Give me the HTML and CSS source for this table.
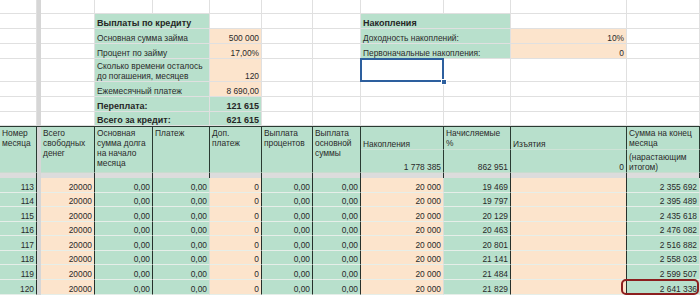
FILE: index.html
```html
<!DOCTYPE html>
<html lang="ru">
<head>
<meta charset="utf-8">
<title>Кредит и накопления</title>
<link rel="stylesheet" href="styles.css">
</head>
<body>
<table class="sheet">
  <colgroup>
    <col class="w-a"><col class="w-gap"><col class="w-b"><col class="w-c"><col class="w-d"><col class="w-e">
    <col class="w-f"><col class="w-g"><col class="w-h"><col class="w-i"><col class="w-j"><col class="w-k">
  </colgroup>
  <tbody>
    <tr class="h14">
      <td></td><td class="gap"></td><td></td><td></td><td></td><td></td><td></td><td></td><td></td><td></td><td></td><td></td>
    </tr>
    <tr class="h15">
      <td></td><td class="gap"></td><td></td>
      <td class="lbl title" colspan="2">Выплаты по кредиту</td>
      <td></td><td></td><td></td>
      <td class="lbl title" colspan="2">Накопления</td>
      <td></td><td></td>
    </tr>
    <tr class="h15">
      <td></td><td class="gap"></td><td></td>
      <td class="lbl" colspan="2">Основная сумма займа</td>
      <td class="inp num">500 000</td>
      <td></td><td></td>
      <td class="lbl" colspan="2">Доходность накоплений:</td>
      <td class="inp num">10%</td>
      <td></td>
    </tr>
    <tr class="h15">
      <td></td><td class="gap"></td><td></td>
      <td class="lbl" colspan="2">Процент по займу</td>
      <td class="inp num">17,00%</td>
      <td></td><td></td>
      <td class="lbl" colspan="2">Первоначальные накопления:</td>
      <td class="inp num">0</td>
      <td></td>
    </tr>
    <tr class="h23">
      <td></td><td class="gap"></td><td></td>
      <td class="lbl" colspan="2">Сколько времени осталось<br>до погашения, месяцев</td>
      <td class="inp num">120</td>
      <td></td><td></td>
      <td class="sel"><span class="selbox"></span><span class="handle"></span></td>
      <td></td><td></td><td></td>
    </tr>
    <tr class="h15">
      <td></td><td class="gap"></td><td></td>
      <td class="lbl" colspan="2">Ежемесячный платеж</td>
      <td class="inp num">8 690,00</td>
      <td></td><td></td><td></td><td></td><td></td><td></td>
    </tr>
    <tr class="h15">
      <td></td><td class="gap"></td><td></td>
      <td class="lbl title" colspan="2">Переплата:</td>
      <td class="lbl num title">121 615</td>
      <td></td><td></td><td></td><td></td><td></td><td></td>
    </tr>
    <tr class="h14">
      <td></td><td class="gap"></td><td></td>
      <td class="lbl title" colspan="2">Всего за кредит:</td>
      <td class="lbl num title">621 615</td>
      <td></td><td></td><td></td><td></td><td></td><td></td>
    </tr>

    <tr class="hd1">
      <td class="hd" rowspan="2">Номер<br>месяца</td>
      <td class="gap hdgap" rowspan="2"></td>
      <td class="hd" rowspan="2">Всего<br>свободных<br>денег</td>
      <td class="hd" rowspan="2">Основная<br>сумма долга<br>на начало<br>месяца</td>
      <td class="hd" rowspan="2">Платеж</td>
      <td class="hd" rowspan="2">Доп.<br>платеж</td>
      <td class="hd" rowspan="2">Выплата<br>процентов</td>
      <td class="hd" rowspan="2">Выплата<br>основной<br>суммы</td>
      <td class="hd hd-top bottom">Накопления</td>
      <td class="hd hd-top">Начисляемые<br>%</td>
      <td class="hd hd-top bottom">Изъятия</td>
      <td class="hd hd-top">Сумма на конец<br>месяца</td>
    </tr>
    <tr class="hd2">
      <td class="hd hd-sub num bottom">1 778 385</td>
      <td class="hd hd-sub num bottom">862 951</td>
      <td class="hd hd-sub num bottom">0</td>
      <td class="hd hd-sub">(нарастающим<br>итогом)</td>
    </tr>
    <tr class="divider">
      <td class="dk"></td><td class="gap"></td><td class="dk"></td><td class="dk"></td><td class="dk"></td><td class="dk"></td>
      <td class="dk"></td><td class="dk"></td><td class="dk"></td><td class="dk"></td><td class="dk"></td><td class="dk"></td>
    </tr>

    <tr class="d15">
      <td class="g dk num">113</td><td class="gap"></td><td class="p dk num">20000</td><td class="g dk num">0,00</td><td class="g num">0,00</td><td class="p dk num">0</td>
      <td class="g dk num">0,00</td><td class="g dk num">0,00</td><td class="p num">20 000</td><td class="g dk num">19 469</td><td class="p dk"></td><td class="g num">2 355 692</td>
    </tr>
    <tr class="d14">
      <td class="g dk num">114</td><td class="gap"></td><td class="p dk num">20000</td><td class="g dk num">0,00</td><td class="g num">0,00</td><td class="p dk num">0</td>
      <td class="g dk num">0,00</td><td class="g dk num">0,00</td><td class="p num">20 000</td><td class="g dk num">19 797</td><td class="p dk"></td><td class="g num">2 395 489</td>
    </tr>
    <tr class="d15">
      <td class="g dk num">115</td><td class="gap"></td><td class="p dk num">20000</td><td class="g dk num">0,00</td><td class="g num">0,00</td><td class="p dk num">0</td>
      <td class="g dk num">0,00</td><td class="g dk num">0,00</td><td class="p num">20 000</td><td class="g dk num">20 129</td><td class="p dk"></td><td class="g num">2 435 618</td>
    </tr>
    <tr class="d14">
      <td class="g dk num">116</td><td class="gap"></td><td class="p dk num">20000</td><td class="g dk num">0,00</td><td class="g num">0,00</td><td class="p dk num">0</td>
      <td class="g dk num">0,00</td><td class="g dk num">0,00</td><td class="p num">20 000</td><td class="g dk num">20 463</td><td class="p dk"></td><td class="g num">2 476 082</td>
    </tr>
    <tr class="d15">
      <td class="g dk num">117</td><td class="gap"></td><td class="p dk num">20000</td><td class="g dk num">0,00</td><td class="g num">0,00</td><td class="p dk num">0</td>
      <td class="g dk num">0,00</td><td class="g dk num">0,00</td><td class="p num">20 000</td><td class="g dk num">20 801</td><td class="p dk"></td><td class="g num">2 516 882</td>
    </tr>
    <tr class="d14">
      <td class="g dk num">118</td><td class="gap"></td><td class="p dk num">20000</td><td class="g dk num">0,00</td><td class="g num">0,00</td><td class="p dk num">0</td>
      <td class="g dk num">0,00</td><td class="g dk num">0,00</td><td class="p num">20 000</td><td class="g dk num">21 141</td><td class="p dk"></td><td class="g num">2 558 023</td>
    </tr>
    <tr class="d15">
      <td class="g dk num">119</td><td class="gap"></td><td class="p dk num">20000</td><td class="g dk num">0,00</td><td class="g num">0,00</td><td class="p dk num">0</td>
      <td class="g dk num">0,00</td><td class="g dk num">0,00</td><td class="p num">20 000</td><td class="g dk num">21 484</td><td class="p dk"></td><td class="g num">2 599 507</td>
    </tr>
    <tr class="d15">
      <td class="g dk num">120</td><td class="gap"></td><td class="p dk num">20000</td><td class="g dk num">0,00</td><td class="g num">0,00</td><td class="p dk num">0</td>
      <td class="g dk num">0,00</td><td class="g dk num">0,00</td><td class="p num">20 000</td><td class="g dk num">21 829</td><td class="p dk"></td><td class="g num marked"><span class="mark"></span>2 641 336</td>
    </tr>
    <tr class="d3">
      <td class="g dk"></td><td class="gap"></td><td class="p dk"></td><td class="g dk"></td><td class="g"></td><td class="p dk"></td>
      <td class="g dk"></td><td class="g dk"></td><td class="p"></td><td class="g dk"></td><td class="p dk"></td><td class="g"></td>
    </tr>
  </tbody>
</table>
</body>
</html>
```

FILE: styles.css
```css
* {
  box-sizing: border-box;
}

html,
body {
  margin: 0;
  padding: 0;
  background: #ffffff;
}

body {
  width: 700px;
  height: 295px;
  overflow: hidden;
  font-family: "Liberation Sans", Arial, sans-serif;
  font-size: 8.4px;
  color: #2a2a2a;
}

.sheet {
  border-collapse: separate;
  border-spacing: 0;
  table-layout: fixed;
  width: 700px;
}

.w-a { width: 37px; }
.w-gap { width: 4px; }
.w-b { width: 54px; }
.w-c { width: 58px; }
.w-d { width: 57px; }
.w-e { width: 52px; }
.w-f { width: 51px; }
.w-g { width: 48px; }
.w-h { width: 83px; }
.w-i { width: 67px; }
.w-j { width: 116px; }
.w-k { width: 73px; }

.sheet td {
  padding: 0 2px;
  border-right: 1px solid #e0e0e0;
  border-bottom: 1px solid #e0e0e0;
  white-space: nowrap;
  overflow: hidden;
  vertical-align: bottom;
  line-height: 10px;
}

.h14 { height: 14px; }
.h15 { height: 15px; }
.h23 { height: 23px; }
.hd1 { height: 24px; }
.hd2 { height: 20px; }
.divider { height: 5px; }
.d15 { height: 15px; }
.d14 { height: 14px; }
.d3 { height: 3px; }

.sheet td.gap {
  background: #d6d6d6;
  border-right: 0;
  border-bottom-color: #d6d6d6;
  padding: 0;
}

.lbl {
  background: #b8e0cc;
}

.inp {
  background: #fce4cc;
}

.title {
  font-weight: bold;
  font-size: 9px;
  color: #262626;
}

.num {
  text-align: right;
}

/* selected cell */
.sheet td.sel {
  position: relative;
  overflow: visible;
}

.selbox {
  position: absolute;
  left: -1px;
  top: -1px;
  right: -1px;
  bottom: -1px;
  border: 2px solid #2d5f9e;
}

.handle {
  position: absolute;
  right: -4px;
  bottom: -4px;
  width: 6px;
  height: 6px;
  background: #2d5f9e;
  border: 1px solid #ffffff;
}

/* header */
.sheet td.hd {
  background: #b8e0cc;
  white-space: normal;
  vertical-align: top;
  border-right: 1px solid #2a3a32;
  border-bottom-color: #c9dccf;
  padding-top: 1px;
}

.hd1 td {
  border-top: 1px solid #2a3a32;
}

.sheet td.hd-top {
  border-bottom-color: #cfe3d7;
}

.sheet td.hd.bottom {
  vertical-align: bottom;
  padding-top: 0;
  padding-bottom: 0;
}

.sheet td.hd-sub {
  padding-top: 2px;
}

.sheet td.hdgap {
  background: #d6d6d6;
  border-right: 0;
}

.divider td {
  background: #dcdcdc;
  border-bottom: 0;
  border-right-color: #dcdcdc;
}

/* data rows */
.g {
  background: #b8e0cc;
}

.p {
  background: #fce4cc;
}

.d15 td,
.d14 td,
.d3 td {
  border-bottom-color: #e6eee9;
  border-right-color: #d9ddd9;
}

.d3 td {
  border-bottom: 0;
}

.sheet td.dk {
  border-right-color: #26302b;
}

.sheet td.marked {
  position: relative;
  overflow: visible;
}

.mark {
  position: absolute;
  left: -6px;
  top: -1px;
  right: 0;
  bottom: -1px;
  border: 2px solid #8c1f1f;
  border-radius: 5px;
}
```
